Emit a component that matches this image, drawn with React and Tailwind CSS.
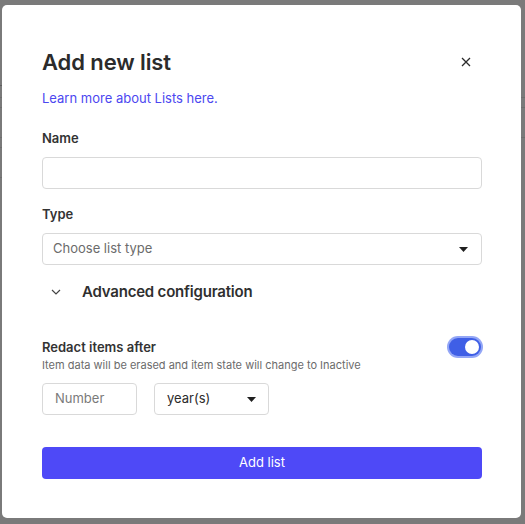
import React from "react";

function Caret({ className = "" }) {
  return (
    <svg width="9" height="5" viewBox="0 0 9 5" className={className}>
      <path d="M0 0 H9 L4.5 5 Z" fill="#1f1f1f" />
    </svg>
  );
}

export default function App() {
  return (
    <div
      className="relative h-[524px] w-[525px] overflow-hidden bg-[#7a7a7a] pl-[2px] pt-[5px]"
      style={{ fontFamily: "Inter, 'Noto Sans', sans-serif" }}
    >
      {/* faint underlying page lines */}
      <div className="absolute left-0 top-[85px] h-px w-[3px] bg-[#5f5f5f]" />
      <div className="absolute left-0 top-[97px] h-px w-[3px] bg-[#6e6e6e]" />
      <div className="absolute left-0 top-[107px] h-px w-[3px] bg-[#6e6e6e]" />
      <div className="absolute left-0 top-[137px] h-px w-[3px] bg-[#6e6e6e]" />
      <div className="absolute left-0 top-[147px] h-px w-[3px] bg-[#6e6e6e]" />
      <div className="absolute left-0 top-[177px] h-px w-[3px] bg-[#6e6e6e]" />
      <div className="absolute right-0 top-[97px] h-px w-[4px] bg-[#6e6e6e]" />
      <div className="absolute right-0 top-[107px] h-px w-[4px] bg-[#6e6e6e]" />
      <div className="absolute right-0 top-[137px] h-px w-[4px] bg-[#6e6e6e]" />

      <div className="relative flex h-[513px] w-[519px] flex-col rounded-[5px] bg-white pl-[40px] pr-[39px] pt-[43px]">
        <div className="flex items-center justify-between">
          <h1 className="text-[22px] font-semibold leading-[28px] tracking-[-0.1px] text-[#2b2b2b]">
            Add new list
          </h1>
          <button className="flex h-[28px] w-[32px] items-center justify-center">
            <svg width="10" height="10" viewBox="0 0 10 10">
              <path d="M1 1 L9 9 M9 1 L1 9" stroke="#2b2b2b" strokeWidth="1.3" />
            </svg>
          </button>
        </div>

        <a className="mt-[12px] text-[13px] leading-[20px] text-[#4c47f0]">
          Learn more about Lists here.
        </a>

        <label className="mt-[20px] text-[13px] font-semibold leading-[20px] text-[#333]">
          Name
        </label>
        <div className="mt-[9px] h-[32px] rounded-[4px] border border-[#d9d9d9]" />

        <label className="mt-[15px] text-[13px] font-semibold leading-[20px] text-[#333]">
          Type
        </label>
        <div className="mt-[9px] flex h-[32px] items-center justify-between rounded-[4px] border border-[#d9d9d9] pl-[10px] pr-[13px]">
          <span className="text-[13px] text-[#6b6b6b]">Choose list type</span>
          <Caret />
        </div>

        <div className="mt-[15px] flex h-[24px] items-center">
          <svg width="10" height="6" viewBox="0 0 10 6" className="ml-[9px]">
            <path d="M1 1 L5 5 L9 1" fill="none" stroke="#444" strokeWidth="1.2" />
          </svg>
          <span className="ml-[21px] text-[15px] font-semibold leading-[24px] tracking-[-0.2px] text-[#2f2f2f]">
            Advanced configuration
          </span>
        </div>

        <div className="mt-[32px] flex h-[21px] items-center justify-between">
          <span className="text-[13px] font-semibold leading-[20px] text-[#333]">
            Redact items after
          </span>
          <div className="mr-[1px] flex h-[18px] w-[32px] items-center justify-end rounded-full bg-[#3f5fe6] pr-[2px] ring-2 ring-[#93a6f6]">
            <div className="h-[14px] w-[14px] rounded-full bg-white" />
          </div>
        </div>
        <p className="text-[11px] leading-[16px] text-[#6b6b6b]">
          Item data will be erased and item state will change to Inactive
        </p>

        <div className="mt-[10px] flex gap-[17px]">
          <div className="flex h-[32px] w-[95px] items-center rounded-[4px] border border-[#d9d9d9] pl-[12px]">
            <span className="text-[13px] text-[#7a7a7a]">Number</span>
          </div>
          <div className="flex h-[32px] w-[115px] items-center justify-between rounded-[4px] border border-[#d9d9d9] pl-[12px] pr-[12px]">
            <span className="text-[13px] text-[#2b2b2b]">year(s)</span>
            <Caret />
          </div>
        </div>

        <button className="mt-[32px] flex h-[32px] items-center justify-center rounded-[4px] bg-[#4e49f7] text-[13px] text-white">
          Add list
        </button>
      </div>
    </div>
  );
}
